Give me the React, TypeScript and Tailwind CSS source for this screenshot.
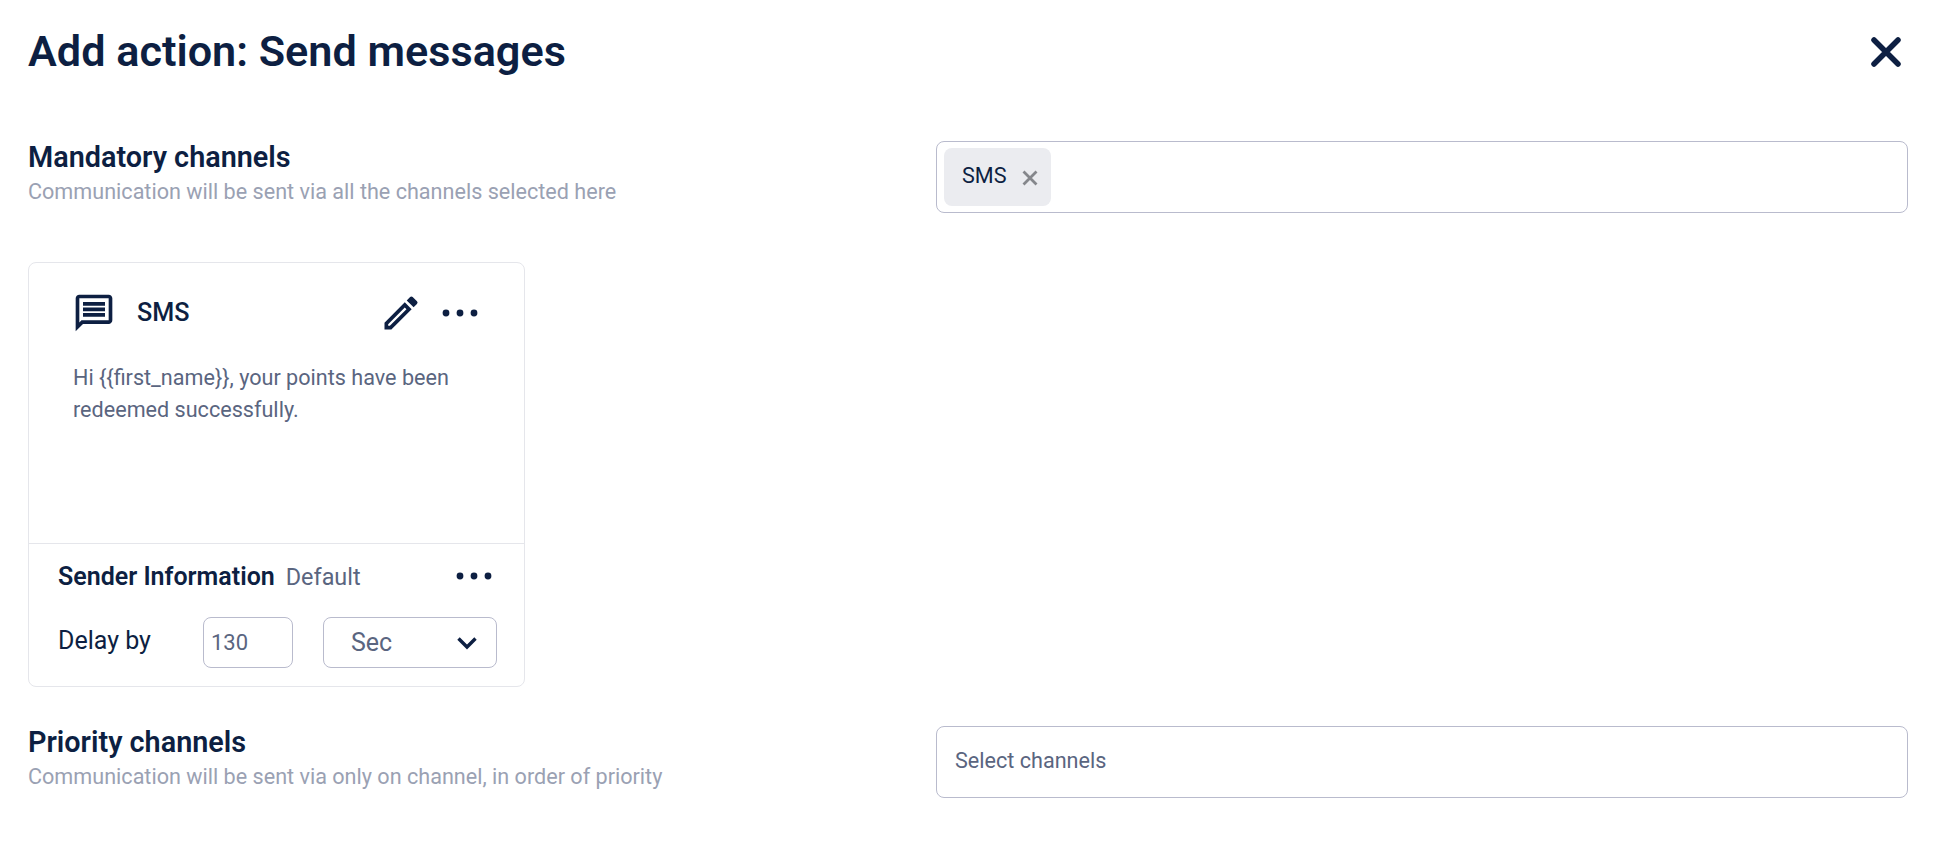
import { MdOutlineEdit, MdOutlineMessage } from "react-icons/md";

function Dots({ className }: { className?: string }) {
  return (
    <svg width="36" height="8" viewBox="0 0 36 8" className={className}>
      <circle cx="4" cy="4" r="3.4" fill="#0d1f42" />
      <circle cx="18" cy="4" r="3.4" fill="#0d1f42" />
      <circle cx="32" cy="4" r="3.4" fill="#0d1f42" />
    </svg>
  );
}

function Section({ title, desc, children }: { title: string; desc: string; children: React.ReactNode }) {
  return (
    <div className="flex items-start justify-between pr-[52px]">
      <div className="-mt-[1px]">
        <div className="text-[28.8px] leading-[34px] font-semibold text-[#0d1f42]">{title}</div>
        <div className="mt-[4px] text-[21.6px] leading-[28px] text-[#9aa1b3]">{desc}</div>
      </div>
      <div className="flex h-[72px] w-[972px] items-center rounded-[8px] border border-[#b9bbcd] bg-white">
        {children}
      </div>
    </div>
  );
}

export default function App() {
  return (
    <div className="min-h-[852px] bg-white pl-[28px] font-['Roboto',sans-serif]">
      <div className="flex items-center justify-between pt-[26px] pr-[52px]">
        <h1 className="text-[43.2px] leading-[52px] font-semibold text-[#0d1f42]">Add action: Send messages</h1>
        <svg width="32" height="32" viewBox="0 0 32 32" className="mr-[6px]">
          <path d="M4 4 L28 28 M28 4 L4 28" stroke="#0d1f42" strokeWidth="5.5" strokeLinecap="round" />
        </svg>
      </div>

      <div className="mt-[63px]">
        <Section title="Mandatory channels" desc="Communication will be sent via all the channels selected here">
          <div className="ml-[7px] flex h-[58px] w-[107px] items-center rounded-[8px] bg-[#ebecf0] pl-[18px]">
            <span className="-mt-[2px] text-[21.6px] text-[#0d1f42]">SMS</span>
            <svg width="18" height="18" viewBox="0 0 18 18" className="mt-[2px] ml-[14px]">
              <path d="M2.5 2.5 L15.5 15.5 M15.5 2.5 L2.5 15.5" stroke="#85878c" strokeWidth="2.8" />
            </svg>
          </div>
        </Section>
      </div>

      <div className="mt-[49px] h-[425px] w-[497px] rounded-[8px] border border-[#e5e6eb] bg-white">
        <div className="flex h-[281px] flex-col border-b border-[#e5e6eb]">
          <div className="flex items-center pt-[27px] pl-[43px]">
            <MdOutlineMessage className="mt-[1px] text-[#0d1f42]" size={44} />
            <span className="mt-[1px] ml-[21px] text-[25.2px] leading-[28px] font-medium text-[#0d1f42]">SMS</span>
            <MdOutlineEdit className="ml-auto text-[#0d1f42]" size={44} />
            <Dots className="mr-[46px] ml-[19px]" />
          </div>
          <p className="mt-[27px] w-[440px] pl-[44px] text-[21.6px] leading-[32px] text-[#5a6580]">
            {"Hi {{first_name}}, your points have been redeemed successfully."}
          </p>
        </div>
        <div className="pr-[27px] pl-[29px]">
          <div className="flex items-center pt-[17px]">
            <span className="text-[25px] leading-[30px] font-semibold text-[#0d1f42]">Sender Information</span>
            <span className="mt-[1px] ml-[11px] text-[23.4px] leading-[30px] text-[#5a6580]">Default</span>
            <Dots className="-mt-[1px] mr-[5px] ml-auto" />
          </div>
          <div className="mt-[25px] flex items-center">
            <span className="-mt-[4px] w-[145px] shrink-0 text-[25px] leading-[30px] text-[#0d1f42]">Delay by</span>
            <div className="flex h-[51px] w-[90px] shrink-0 items-center rounded-[8px] border border-[#b9bbcd] pl-[7px] text-[22px] text-[#5a6580]">130</div>
            <div className="ml-[30px] flex h-[51px] w-[174px] shrink-0 items-center justify-between rounded-[8px] border border-[#b9bbcd] pr-[18px] pl-[27px] text-[25px] text-[#5a6580]">
              Sec
              <svg width="22" height="14" viewBox="0 0 22 14">
                <path d="M2.5 2.5 L11 11 L19.5 2.5" fill="none" stroke="#0d1f42" strokeWidth="3.4" />
              </svg>
            </div>
          </div>
        </div>
      </div>

      <div className="mt-[39px]">
        <Section title="Priority channels" desc="Communication will be sent via only on channel, in order of priority">
          <span className="-mt-[2px] pl-[18px] text-[21.6px] text-[#5a6580]">Select channels</span>
        </Section>
      </div>
    </div>
  );
}
